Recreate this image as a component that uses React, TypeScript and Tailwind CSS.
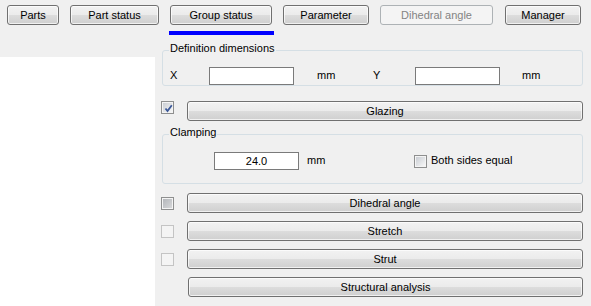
import type { ReactNode } from "react";

const btn =
  "flex h-[20px] items-center justify-center rounded-[3px] border border-[#707070] bg-[linear-gradient(#f2f2f2_0%,#ebebeb_50%,#dddddd_50%,#cfcfcf_100%)] text-[11px] leading-none text-black shadow-[inset_0_0_0_1px_rgba(255,255,255,0.7)]";

function Btn({ w, children, disabled }: { w: string; children: ReactNode; disabled?: boolean }) {
  if (disabled) {
    return (
      <div className={`flex h-[20px] items-center justify-center rounded-[3px] border border-[#adb2b5] bg-[#f4f4f4] text-[11px] leading-none text-[#838383] ${w}`}>
        {children}
      </div>
    );
  }
  return <div className={`${btn} ${w}`}>{children}</div>;
}

function Check({ state }: { state: "checked" | "normal" | "hot" | "disabled" }) {
  if (state === "disabled") {
    return <div className="h-[13px] w-[13px] shrink-0 border border-[#c4c4c4] bg-[#f4f4f4]" />;
  }
  const inner =
    state === "hot"
      ? "bg-[linear-gradient(135deg,#b4b7bb,#d6d7d9)]"
      : "bg-[linear-gradient(135deg,#c9cdd3,#f7f7f7)]";
  return (
    <div className="relative h-[13px] w-[13px] shrink-0 border border-[#8e8f8f] bg-[#f4f4f4] p-[1px]">
      <div className={`h-full w-full ${inner}`} />
      {state === "checked" ? (
        <svg className="absolute left-[1px] top-[1px]" width="11" height="11" viewBox="0 0 11 11">
          <path d="M2.5 5.5 L4.5 8 L8.8 2.2" fill="none" stroke="#3b5898" strokeWidth="1.8" />
        </svg>
      ) : null}
    </div>
  );
}

function TextBox({ value, className }: { value?: string; className?: string }) {
  return (
    <div className={`flex h-[18px] w-[85px] items-center justify-center border border-[#7a7a7a] bg-white text-[11px] leading-none text-black ${className ?? ""}`}>
      {value}
    </div>
  );
}

function GroupBox({ label, h, children }: { label: string; h: string; children: ReactNode }) {
  return (
    <div className={`relative ml-[1px] w-[421px] rounded-[3px] border border-[#d5dfe5] ${h}`}>
      <span className="absolute left-[6px] top-[-9px] bg-[#f0f0f0] px-[1px] text-[11px] leading-[13px] text-black">
        {label}
      </span>
      {children}
    </div>
  );
}

export default function App() {
  return (
    <div className="h-[306px] w-[591px] overflow-hidden bg-[#f0f0f0] font-['Liberation_Sans',Arial,sans-serif] text-[11px] text-black">
      <div className="flex gap-[11px] pl-[7px] pt-[5px]">
        <Btn w="w-[52px]">Parts</Btn>
        <Btn w="w-[89px]">Part status</Btn>
        <Btn w="w-[102px]">Group status</Btn>
        <Btn w="w-[86px]">Parameter</Btn>
        <Btn w="w-[113px]" disabled>
          Dihedral angle
        </Btn>
        <Btn w="w-[76px] ml-[1px]">Manager</Btn>
      </div>
      <div className="ml-[169px] mt-[6px] h-[4px] w-[105px] bg-[#0000ff]" />

      <div className="flex">
        <div className="mt-[22px] h-[249px] w-[155px] bg-white" />

        <div className="ml-[6px] flex flex-col pt-[15px]">
          <GroupBox label="Definition dimensions" h="h-[36px]">
            <div className="flex items-center pl-[7px] pt-[16px]">
              <span className="w-[39px] pb-[2px]">X</span>
              <TextBox />
              <span className="ml-[23px] w-[56px] pb-[2px]">mm</span>
              <span className="w-[42px] pb-[2px]">Y</span>
              <TextBox />
              <span className="ml-[22px] pb-[2px]">mm</span>
            </div>
          </GroupBox>

          <div className="mt-[15px] flex items-start">
            <Check state="checked" />
            <Btn w="ml-[13px] w-[396px]">Glazing</Btn>
          </div>

          <div className="mt-[13px]">
            <GroupBox label="Clamping" h="h-[50px]">
              <div className="flex items-center pt-[17px]">
                <TextBox value="24.0" className="ml-[51px]" />
                <span className="ml-[8px] w-[107px] pb-[2px]">mm</span>
                <Check state="normal" />
                <span className="ml-[4px] pb-[2px]">Both sides equal</span>
              </div>
            </GroupBox>
          </div>

          <div className="mt-[9px] flex flex-col gap-[8px]">
            <div className="flex items-center">
              <Check state="hot" />
              <Btn w="ml-[13px] w-[396px]">Dihedral angle</Btn>
            </div>
            <div className="flex items-center">
              <Check state="disabled" />
              <Btn w="ml-[13px] w-[396px]">Stretch</Btn>
            </div>
            <div className="flex items-center">
              <Check state="disabled" />
              <Btn w="ml-[13px] w-[396px]">Strut</Btn>
            </div>
            <div className="flex items-center">
              <Btn w="ml-[27px] w-[395px]">Structural analysis</Btn>
            </div>
          </div>
        </div>
      </div>
    </div>
  );
}
